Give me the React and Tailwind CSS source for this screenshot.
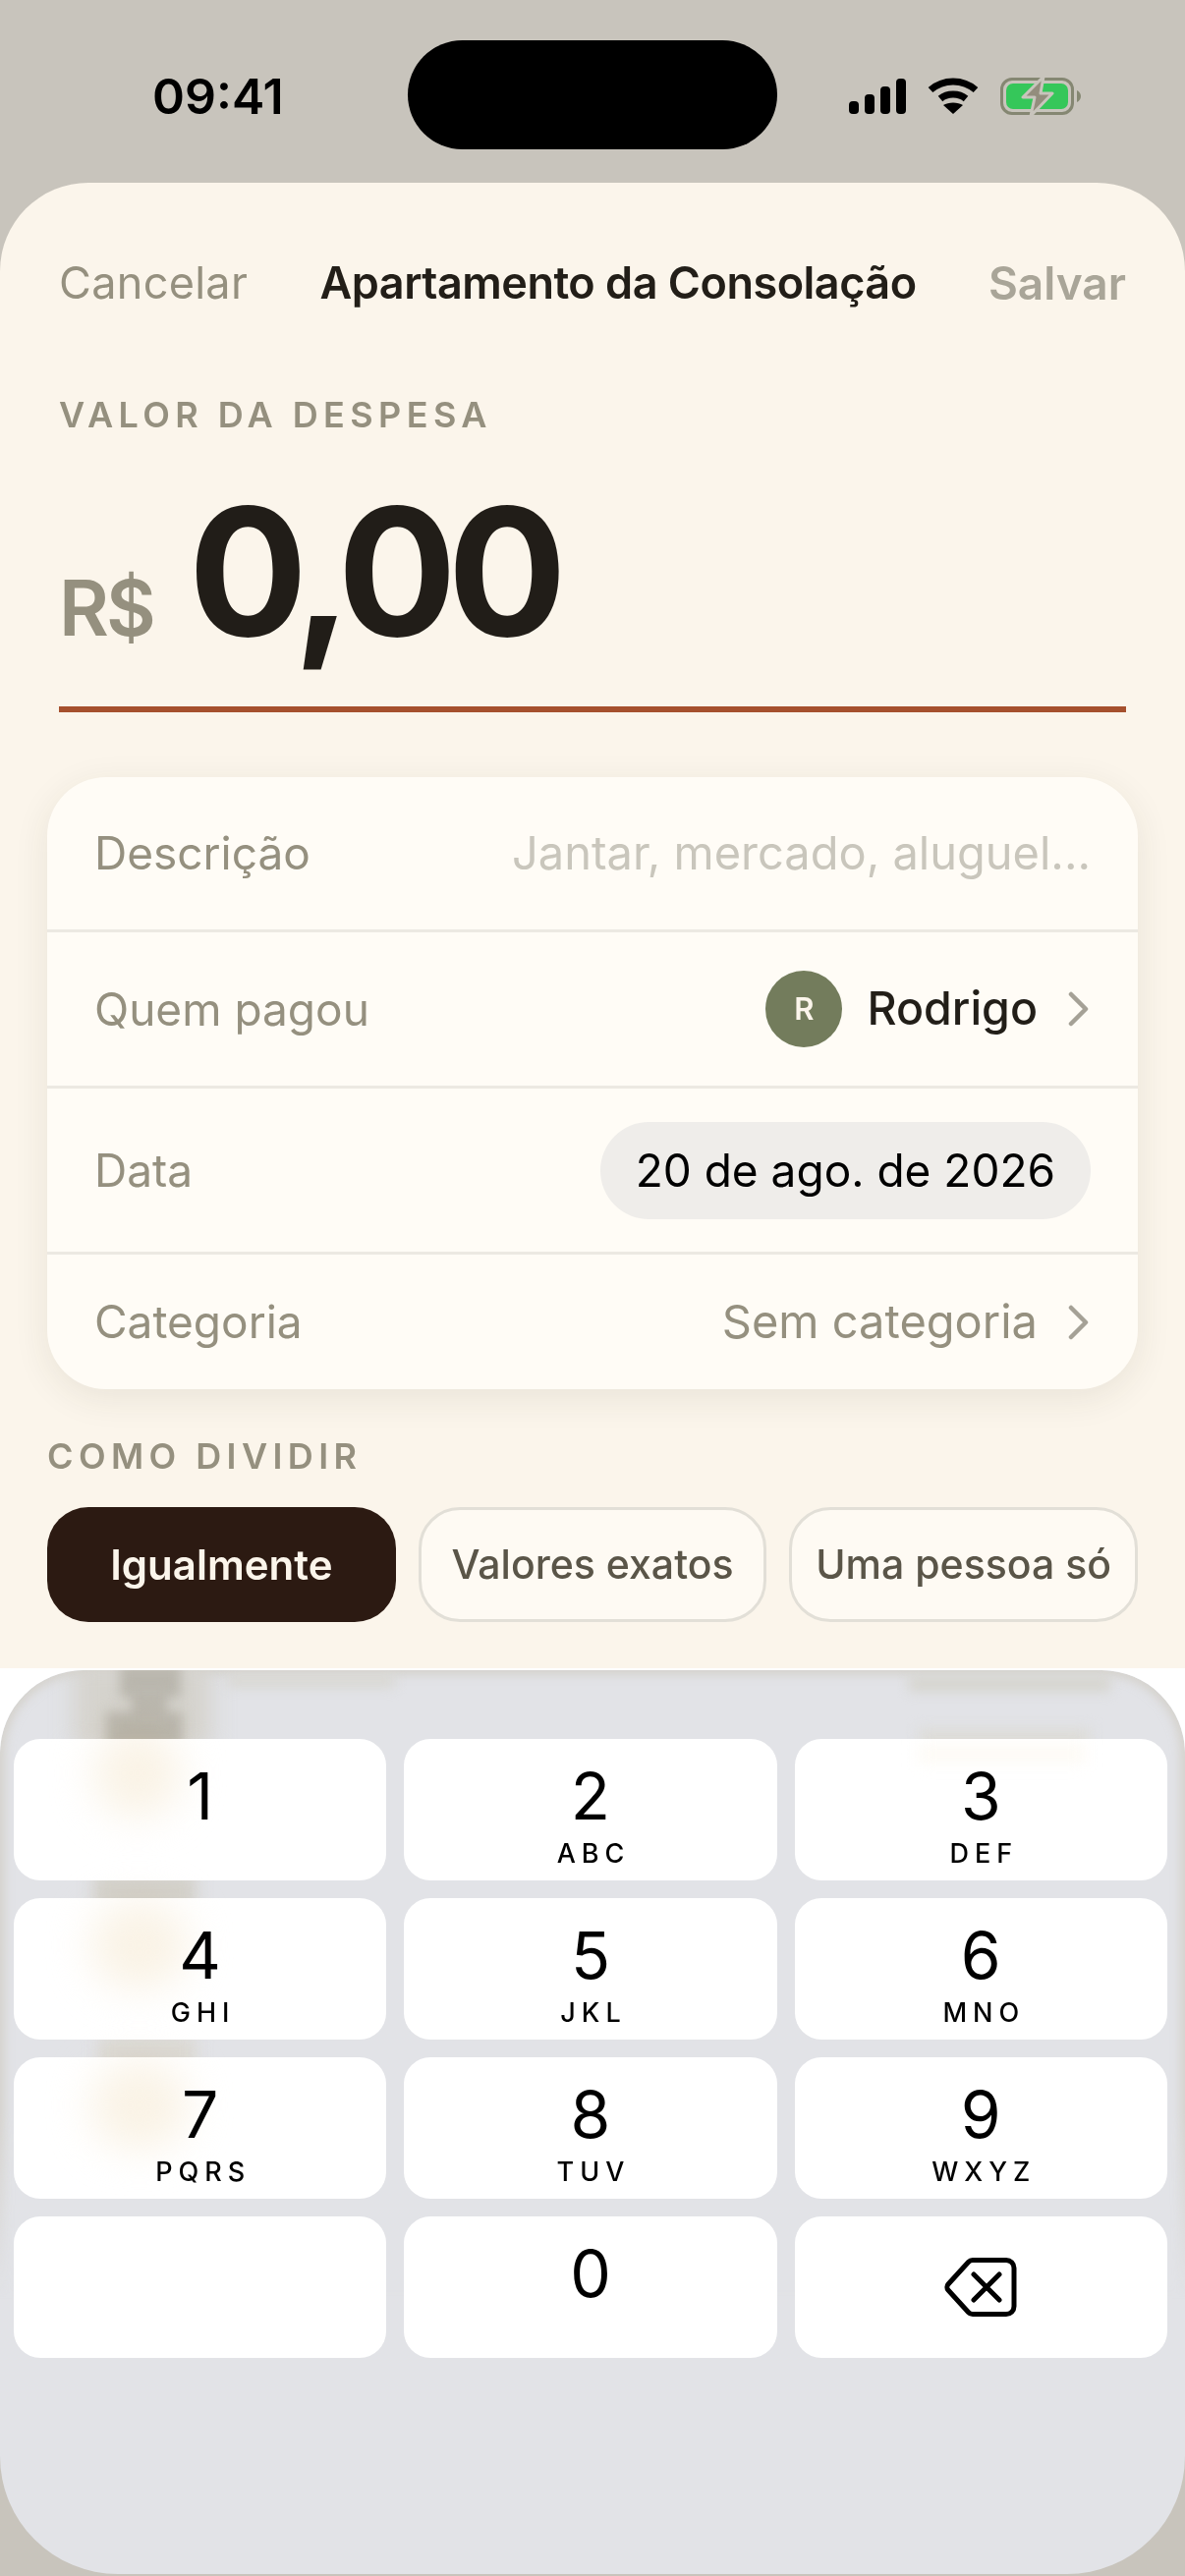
const FONT = 'font-["Inter",sans-serif]';

const keys = [
  ['1', ''],
  ['2', 'ABC'],
  ['3', 'DEF'],
  ['4', 'GHI'],
  ['5', 'JKL'],
  ['6', 'MNO'],
  ['7', 'PQRS'],
  ['8', 'TUV'],
  ['9', 'WXYZ'],
];

const Chevron = () => (
  <svg width="24" height="36" viewBox="0 0 24 36" fill="none">
    <path d="M4 3l15 15L4 33" stroke="#a5a196" strokeWidth="4.5" strokeLinecap="round" strokeLinejoin="round" />
  </svg>
);

const StatusIcons = () => (
  <div className="flex items-center gap-[22px]">
    <svg width="58" height="36" viewBox="0 0 58 36" fill="black">
      <rect x="0" y="23" width="10" height="13" rx="4" />
      <rect x="16" y="16" width="10" height="20" rx="4" />
      <rect x="32" y="8" width="10" height="28" rx="4" />
      <rect x="48" y="0" width="10" height="36" rx="4" />
    </svg>
    <svg width="52" height="38" viewBox="0 0 52 38" fill="none">
      <path d="M3 12.5C16 1 36 1 49 12.500" stroke="black" strokeWidth="7" />
      <path d="M13 21.5C20 15.5 32 15.5 39 21.500" stroke="black" strokeWidth="7" />
      <path d="M26 37L16 28C21 24.5 31 24.5 36 28Z" fill="black" />
    </svg>
    <svg width="82" height="40" viewBox="0 0 82 40" fill="none">
      <rect x="1.5" y="2.5" width="72" height="35" rx="10.5" stroke="#858772" strokeWidth="3" />
      <rect x="6" y="7" width="63" height="26" rx="7" fill="#35c75a" />
      <path d="M78 14v12c2.500-1 4-3.500 4-6s-1.500-5-4-6Z" fill="#858772" />
      <path d="M44 0L23 21h12l-4 19 22-23H41Z" fill="#938d7d" stroke="#c8c4bc" strokeWidth="3" strokeLinejoin="round" />
    </svg>
  </div>
);

const Row = ({ label, children, className }) => (
  <div className={`flex items-center justify-between px-[48px] border-b-[3px] border-[#ece9e2] last:border-b-0 ${className}`}>
    <span className="text-[46px] text-[#95907f]">{label}</span>
    {children}
  </div>
);

const Key = ({ digit, letters }) => (
  <div className="h-[144px] rounded-[27px] bg-white flex flex-col items-center pt-[18px] text-black">
    <span className="text-[66px] leading-[80px]">{digit}</span>
    {letters && <span className="text-[27px] leading-[32px] font-medium tracking-[6px] mr-[-6px] mt-[3px]">{letters}</span>}
  </div>
);

export default function App() {
  return (
    <div className={`w-[1206px] h-[2622px] bg-[#c8c4bc] flex flex-col overflow-hidden ${FONT}`}>
      {/* Status bar */}
      <div className="h-[186px] shrink-0 flex items-start pl-[155px] pr-[106px] pt-[66px]">
        <span className="text-[50px] leading-[64px] font-semibold text-black w-[260px]">09:41</span>
        <div className="w-[376px] h-[111px] rounded-full bg-black mt-[-25px]" />
        <div className="pt-[12px] ml-auto">
          <StatusIcons />
        </div>
      </div>

      {/* Sheet */}
      <div className="h-[1512px] shrink-0 bg-[#fbf5eb] rounded-t-[90px]">
        <div className="flex items-center justify-between px-[60px] pt-[72px]">
          <span className="text-[45px] leading-[60px] tracking-[0.3px] text-[#95907f]">Cancelar</span>
          <span className="text-[45px] leading-[60px] font-semibold text-[#221e18] tracking-[-0.5px]">Apartamento da Consolação</span>
          <span className="text-[46px] leading-[60px] font-semibold text-[#a9a598]">Salvar</span>
        </div>

        <div className="mx-[60px] mt-[82px] text-[36px] leading-[44px] font-semibold tracking-[5.4px] text-[#95907f]">VALOR DA DESPESA</div>

        <div className="mx-[60px] mt-[34px] h-[224px] pt-[17px] flex items-baseline gap-[36px] border-b-[6px] border-[#a5502d] box-content">
          <span className="text-[78px] leading-[94px] font-semibold text-[#95907f] tracking-[-3px]">R$</span>
          <span className="text-[180px] leading-[174px] font-bold text-[#211d18] tracking-[-9.5px]">0,00</span>
        </div>

        {/* Card */}
        <div className="mx-[48px] mt-[66px] rounded-[60px] bg-[#fffcf6] shadow-[0_9px_36px_rgba(60,50,30,0.09)]">
          <Row label="Descrição" className="h-[158px]">
            <span className="text-[47px] text-[#c9c6bc]">Jantar, mercado, aluguel...</span>
          </Row>
          <Row label="Quem pagou" className="h-[159px]">
            <div className="flex items-center gap-[25px]">
              <div className="w-[78px] h-[78px] rounded-full bg-[#737c5c] flex items-center justify-center text-[31px] font-semibold text-[#fbf5eb]">R</div>
              <span className="text-[46.500px] font-medium text-[#221e18] mr-[5px]">Rodrigo</span>
              <Chevron />
            </div>
          </Row>
          <Row label="Data" className="h-[169px]">
            <div className="h-[99px] px-[36px] rounded-full bg-[#efedea] flex items-center text-[46px] text-black">20 de ago. de 2026</div>
          </Row>
          <Row label="Categoria" className="h-[137px]">
            <div className="flex items-center gap-[30px]">
              <span className="text-[47px] text-[#95907f]">Sem categoria</span>
              <Chevron />
            </div>
          </Row>
        </div>

        <div className="mx-[48px] mt-[46px] text-[36px] leading-[44px] font-semibold tracking-[5.4px] text-[#95907f]">COMO DIVIDIR</div>

        <div className="mx-[48px] mt-[30px] grid grid-cols-3 gap-[23px]">
          <div className="h-[117px] rounded-[42px] bg-[#2c1a12] flex items-center justify-center text-[42px] font-semibold text-[#fbf5eb]">Igualmente</div>
          <div className="h-[117px] rounded-[42px] bg-[#fefaf3] border-[3px] border-[#e2dfd7] flex items-center justify-center text-[41px] font-medium text-[#5a5548] whitespace-nowrap">Valores exatos</div>
          <div className="h-[117px] rounded-[42px] bg-[#fefaf3] border-[3px] border-[#e2dfd7] flex items-center justify-center text-[41px] font-medium text-[#5a5548] whitespace-nowrap">Uma pessoa só</div>
        </div>
      </div>

      {/* Keyboard */}
      <div className="h-[924px] shrink-0 pt-[2px] bg-[linear-gradient(white_0,white_200px,#c8c4bc_200px)]">
        <div className="relative h-[920px] overflow-hidden rounded-t-[85px] rounded-b-[120px] bg-[#e2e3e7] pt-[70px] pl-[14px] pr-[18px]">
          {/* blurred sheet showing through the glass */}
          <div className="absolute inset-x-0 top-0 h-[640px] rounded-t-[85px] shadow-[inset_0_0_10px_5px_rgba(205,200,188,0.6)] [mask-image:linear-gradient(black_70%,transparent)]" />
          <div className="absolute left-[75px] top-[-10px] w-[140px] h-[90px] bg-[#d5d3cd] blur-[12px]" />
          <div className="absolute left-[122px] top-[-6px] w-[62px] h-[34px] bg-[#bab7ae] blur-[6px]" />
          <div className="absolute left-[108px] top-[42px] w-[78px] h-[36px] bg-[#bab7ae] blur-[6px]" />
          <div className="absolute left-[134px] top-[18px] w-[36px] h-[36px] bg-[#bab7ae] blur-[5px]" />
          <div className="absolute left-[232px] top-[4px] w-[170px] h-[14px] bg-[#d9d8d3] blur-[6px]" />
          <div className="absolute left-[925px] top-[6px] w-[205px] h-[16px] bg-[#d6d5cf] blur-[6px]" />
          <div className="absolute left-[935px] top-[60px] w-[175px] h-[16px] bg-[#dddcd7] blur-[7px]" />
          <div className="absolute left-[95px] top-[205px] w-[105px] h-[40px] bg-[#d3d1cb] blur-[8px]" />
          <div className="absolute left-[100px] top-[372px] w-[100px] h-[36px] bg-[#dbd9d4] blur-[8px]" />

          <div className="relative grid grid-cols-3 gap-[18px]">
            {keys.map(([digit, letters]) => (
              <Key key={digit} digit={digit} letters={letters} />
            ))}
            <div className="h-[144px] rounded-[27px] bg-white" />
            <Key digit="0" />
            <div className="h-[144px] rounded-[27px] bg-white flex items-center justify-center">
              <svg width="74" height="60" viewBox="0 0 74 60" fill="none" stroke="black" strokeWidth="5" strokeLinecap="round" strokeLinejoin="round">
                <path d="M29 2.500H63a8 8 0 0 1 8 8V49.500a8 8 0 0 1-8 8H29a6 6 0 0 1-4.500-2L4 33a4.500 4.500 0 0 1 0-6L24.500 4.500a6 6 0 0 1 4.500-2Z" />
                <path d="M30 17l26 26M56 17L30 43" />
              </svg>
            </div>
          </div>

          {/* warm tint of the same blur, over the keys */}
          <div className="absolute left-[95px] top-[60px] w-[90px] h-[90px] rounded-full bg-[#faf3e6] blur-[20px] mix-blend-multiply" />
          <div className="absolute left-[92px] top-[235px] w-[100px] h-[90px] rounded-full bg-[#faf3e6] blur-[20px] mix-blend-multiply" />
          <div className="absolute left-[92px] top-[398px] w-[100px] h-[90px] rounded-full bg-[#faf3e6] blur-[20px] mix-blend-multiply" />
          <div className="absolute left-[935px] top-[76px] w-[170px] h-[18px] bg-[#fdfaf4] blur-[8px] mix-blend-multiply" />
        </div>
      </div>
    </div>
  );
}
